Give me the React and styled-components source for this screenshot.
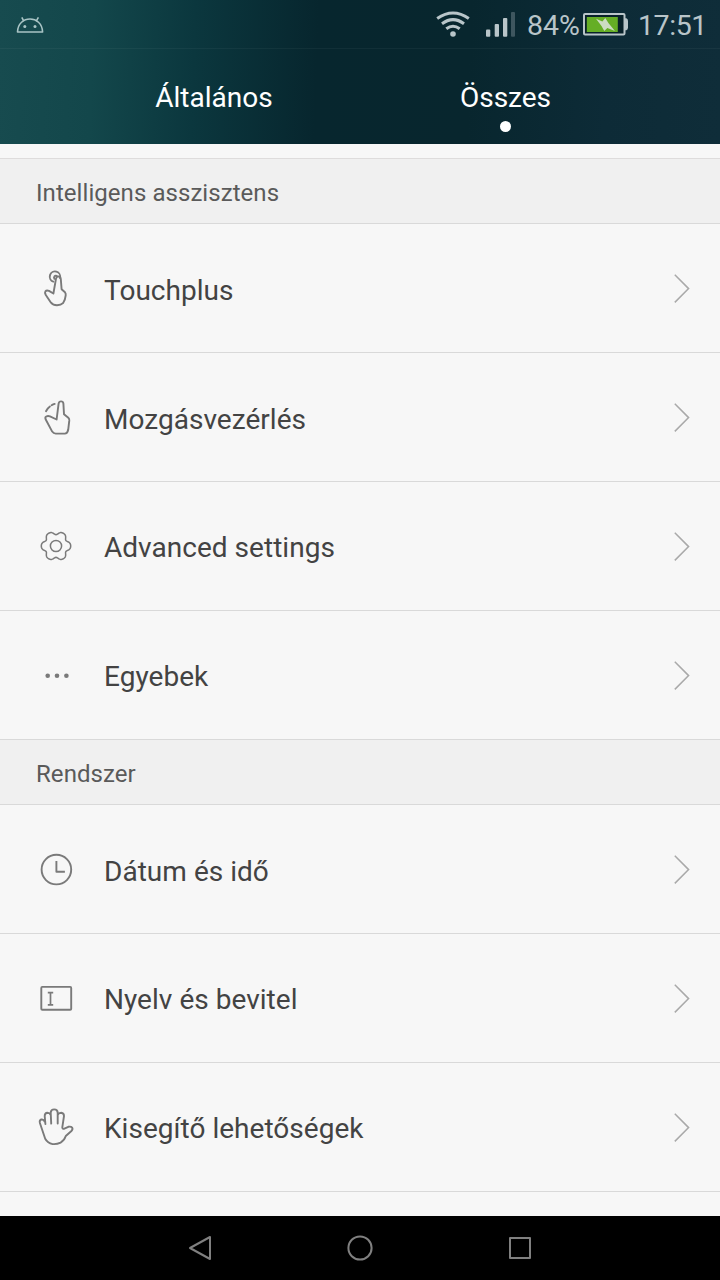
import React from "react";
import styled, { createGlobalStyle, css } from "styled-components";

const GlobalStyle = createGlobalStyle`
  * {
    box-sizing: border-box;
  }
  body {
    margin: 0;
    font-family: Roboto, "Noto Sans", sans-serif;
    background-color: #000;
  }
`;

const Screen = styled.div`
  display: flex;
  flex-direction: column;
  width: 720px;
  height: 1280px;
  overflow: hidden;
  background-color: #f7f7f7;
`;

const Header = styled.header`
  flex-shrink: 0;
  height: 144px;
  background: linear-gradient(
    92deg,
    #174b4f 0%,
    #13474b 13%,
    #0b373e 27%,
    #07262e 44%,
    #08262e 65%,
    #0d2b37 84%,
    #0f2d39 100%
  );
`;

const StatusBar = styled.div`
  display: flex;
  align-items: center;
  height: 49px;
  padding: 0 12px 0 16px;
  border-bottom: 1px solid rgba(255, 255, 255, 0.045);
  color: #b9c5c9;
`;

const StatusIcon = styled.svg`
  display: block;
  flex-shrink: 0;
  width: ${(props) => props.$width}px;
  height: 48px;
  margin-left: ${(props) => props.$gap || 0}px;
`;

const StatusText = styled.span`
  width: ${(props) => props.$width}px;
  margin-left: ${(props) => props.$gap || 0}px;
  padding-top: 3px;
  font-size: 28.5px;
  line-height: 34px;
  letter-spacing: ${(props) => props.$spacing || 0}px;
  white-space: nowrap;
`;

const Spacer = styled.div`
  flex: 1;
`;

const Tabs = styled.nav`
  display: grid;
  grid-template-columns: 292px 292px;
  justify-content: center;
  height: 95px;
`;

const Tab = styled.div`
  display: flex;
  flex-direction: column;
  align-items: center;
  padding-top: 32px;
  font-size: 28px;
  line-height: 34px;
  color: #fff;
  ${(props) =>
    props.$active &&
    css`
      padding-right: 1px;
      &::after {
        content: "";
        width: 11px;
        height: 11px;
        margin-top: 6px;
        border-radius: 50%;
        background-color: #fff;
      }
    `};
`;

const List = styled.main`
  flex: 1;
  min-height: 0;
  padding-top: 14px;
  overflow: hidden;
`;

const SectionTitle = styled.h2`
  display: flex;
  align-items: center;
  height: ${(props) => (props.$first ? 66 : 65)}px;
  margin: 0;
  padding: 4px 36px 0;
  border-bottom: 1px solid #d9d9d9;
  ${(props) =>
    props.$first &&
    css`
      border-top: 1px solid #dedcdc;
    `};
  background-color: #f0f0f0;
  font-size: 24px;
  font-weight: 400;
  letter-spacing: 0.06px;
  color: #5a5a5a;
`;

const Row = styled.div`
  display: flex;
  align-items: center;
  height: 129px;
  padding: 0 28px 0 36px;
  border-bottom: 1px solid #d9d9d9;
`;

const RowIcon = styled.svg`
  flex-shrink: 0;
  width: 40px;
  height: 48px;
  fill: none;
  stroke: #7a7a7a;
  stroke-width: 1.9;
  stroke-linecap: round;
  stroke-linejoin: round;
`;

const RowLabel = styled.span`
  flex: 1;
  margin-left: 28px;
  padding-top: ${(props) => (props.$low ? 5 : 3)}px;
  font-size: 28px;
  line-height: 34px;
  letter-spacing: 0.03px;
  color: #434343;
`;

const Chevron = styled.svg`
  width: 20px;
  height: 32px;
  fill: none;
  stroke: #a9a9a9;
  stroke-width: 1.5;
`;

const NavBar = styled.footer`
  display: grid;
  grid-template-columns: repeat(3, 160px);
  justify-content: center;
  justify-items: center;
  align-items: center;
  flex-shrink: 0;
  height: 64px;
  background-color: #000;
`;

const NavIcon = styled.svg`
  width: 32px;
  height: 32px;
  fill: none;
  stroke: #808080;
  stroke-width: 2;
  stroke-linejoin: round;
`;

// six soft lobes around the centre
const gearPoints = Array.from({ length: 120 }, (_, i) => {
  const a = (i * Math.PI) / 60;
  const r = 13.3 + 1.7 * Math.cos(6 * a) - 0.3 * Math.cos(12 * a);
  return `${(20 + r * Math.cos(a)).toFixed(2)},${(24 + r * Math.sin(a)).toFixed(2)}`;
}).join(" ");

const icons = {
  touch: (
    <>
      <path d="M17.3 17.6A5.2 5.2 0 1 1 24 14" />
      <path d="M18.4 14.8C17.3 12.8 18.8 11.1 20.8 11.9" />
      <path d="M17.4 29.5L20 14.6Q20.4 12.6 22.4 12.4Q24.6 12.4 24.8 15L25.6 25.2L29 28.3Q30 29.4 29.7 31.4Q29.3 36 27 39.2Q25 41.3 21 41.3Q17 41.3 15 38.7L9.8 31Q8.5 28.5 9.4 27.3Q10.6 25.9 13 26.9Z" />
    </>
  ),
  motion: (
    <>
      <path d="M20.6 26.5L22.6 10.6Q23 8.4 25 8.4Q27.2 8.4 27.4 10.6L28 21.2L32.3 24.8Q33.4 25.8 33.3 27.4L32.2 36.8Q31.4 40.6 28.8 40.6H19.7Q17.5 40.6 16.2 38.6L10 27Q8.6 24.4 10.2 23.5Q12 22.6 14 23.4Z" />
      <path d="M10 18.2Q11.5 15.4 13.9 13.6M15.6 12.3Q17.2 11.3 18.7 10.9" />
    </>
  ),
  gear: (
    <g strokeWidth="1.5">
      <polygon points={gearPoints} />
      <circle cx="20" cy="24" r="5.6" />
    </g>
  ),
  dots: (
    <g fill="#7a7a7a" stroke="none">
      <circle cx="11.7" cy="24.7" r="2.3" />
      <circle cx="21" cy="24.7" r="2.3" />
      <circle cx="30.4" cy="24.7" r="2.3" />
    </g>
  ),
  clock: (
    <>
      <circle cx="20.4" cy="24.6" r="14.8" />
      <path d="M20.4 16V26.8H28.9" strokeLinecap="butt" />
    </>
  ),
  input: (
    <>
      <rect x="5.3" y="12.9" width="29.9" height="22.8" rx="1" />
      <path d="M11.8 18.6H17.2M11.8 30.8H17.2M14.5 18.6V30.8" strokeLinecap="butt" strokeWidth="1.7" />
    </>
  ),
  hand: (
    <path d="M9.4 21L8.7 13Q8.7 10 11.4 9.8Q13.6 9.8 14.6 11.8M15.2 20.6L14.7 9.6Q15 6.4 18.2 6.4Q21.5 6.4 21.7 9.6V20.6M21.8 11.8Q22.8 9.8 25.2 9.8Q28 10.2 28 13L26.3 24.4Q26.5 26.5 28.4 25.6L32.3 23.8Q35 23.2 36.1 24.6Q37.2 26.3 35.4 28L29.8 33Q28.2 37.6 24.6 39.6Q20.8 41.5 16.6 41.1Q11.6 40.1 9.2 35.8L3.9 20Q3.2 17.2 5.2 16.5Q7.6 16 8.5 18.5" />
  ),
};

const sections = [
  {
    title: "Intelligens asszisztens",
    rows: [
      { icon: "touch", label: "Touchplus", low: true },
      { icon: "motion", label: "Mozgásvezérlés", low: true },
      { icon: "gear", label: "Advanced settings" },
      { icon: "dots", label: "Egyebek" },
    ],
  },
  {
    title: "Rendszer",
    rows: [
      { icon: "clock", label: "Dátum és idő", low: true },
      { icon: "input", label: "Nyelv és bevitel" },
      { icon: "hand", label: "Kisegítő lehetőségek" },
    ],
  },
];

const StatusIcons = () => (
  <StatusBar>
    <StatusIcon $width={30} viewBox="0 0 30 48" fill="none" stroke="#a9c4c5" strokeWidth="1.6">
      <path d="M1.5 32C2 14.6 26 14.6 26.6 32Z" strokeLinejoin="round" />
      <path d="M7.8 21.2L5.8 17.4M20.2 21.2L22.4 17.4" />
      <circle cx="8.8" cy="26.5" r="1.5" fill="#a9c4c5" stroke="none" />
      <circle cx="19" cy="26.5" r="1.5" fill="#a9c4c5" stroke="none" />
    </StatusIcon>
    <Spacer />
    <StatusIcon $width={34} viewBox="0 0 34 48" fill="none" stroke="#b9c5c9" strokeWidth="3">
      <path d="M1.2 18.5Q17 7.5 32.8 18.5" />
      <path d="M6 23.8Q17 15.5 28 23.8" />
      <path d="M10.3 28.8Q17 23.6 23.7 28.8" />
      <circle cx="17" cy="34" r="2.8" fill="#b9c5c9" stroke="none" />
    </StatusIcon>
    <StatusIcon $width={30} $gap={16} viewBox="0 0 30 48" fill="#b9c5c9">
      <rect x="0" y="29.5" width="4.3" height="7.3" rx="1" />
      <rect x="8.7" y="24" width="4.3" height="12.8" rx="1" />
      <rect x="17" y="18" width="4.3" height="18.8" rx="1" />
      <rect x="25" y="12" width="4" height="24.8" rx="1" opacity="0.3" />
    </StatusIcon>
    <StatusText $width={52} $gap={11}>
      84%
    </StatusText>
    <StatusIcon $width={46} $gap={4} viewBox="0 0 46 48">
      <rect x="1" y="14" width="40.5" height="20.4" rx="1" fill="#082129" stroke="#b9c5c9" strokeWidth="2" />
      <rect x="3.8" y="17" width="31" height="15" fill="#65ae25" />
      <path d="M42 18.3H43.4Q45 19 45 21V27.5Q45 29.5 43.4 30.2H42Z" fill="#b9c5c9" />
      <path d="M13 18.8L19.4 21.6L22.3 18L25.6 23.3L32 31L24.3 27.9L21.3 31L18.5 25.9Z" fill="#ccdcc2" />
    </StatusIcon>
    <StatusText $width={70} $gap={9} $spacing={-0.4}>
      17:51
    </StatusText>
  </StatusBar>
);

const SettingsRow = ({ icon, label, low }) => (
  <Row>
    <RowIcon viewBox="0 0 40 48">{icons[icon]}</RowIcon>
    <RowLabel $low={low}>{label}</RowLabel>
    <Chevron viewBox="0 0 20 32">
      <path d="M2.8 2.8L16.6 16.6L2.8 30.4" />
    </Chevron>
  </Row>
);

const App = () => {
  return (
    <>
      <GlobalStyle />
      <Screen>
        <Header>
          <StatusIcons />
          <Tabs>
            <Tab>Általános</Tab>
            <Tab $active>Összes</Tab>
          </Tabs>
        </Header>
        <List>
          {sections.map((section, index) => (
            <section key={section.title}>
              <SectionTitle $first={index === 0}>{section.title}</SectionTitle>
              {section.rows.map((row) => (
                <SettingsRow key={row.label} {...row} />
              ))}
            </section>
          ))}
        </List>
        <NavBar>
          <NavIcon viewBox="0 0 32 32">
            <path d="M6 16L26 5V27Z" />
          </NavIcon>
          <NavIcon viewBox="0 0 32 32">
            <circle cx="16" cy="16" r="11.6" />
          </NavIcon>
          <NavIcon viewBox="0 0 32 32">
            <rect x="6" y="6" width="20" height="20" />
          </NavIcon>
        </NavBar>
      </Screen>
    </>
  );
};

export default App;
